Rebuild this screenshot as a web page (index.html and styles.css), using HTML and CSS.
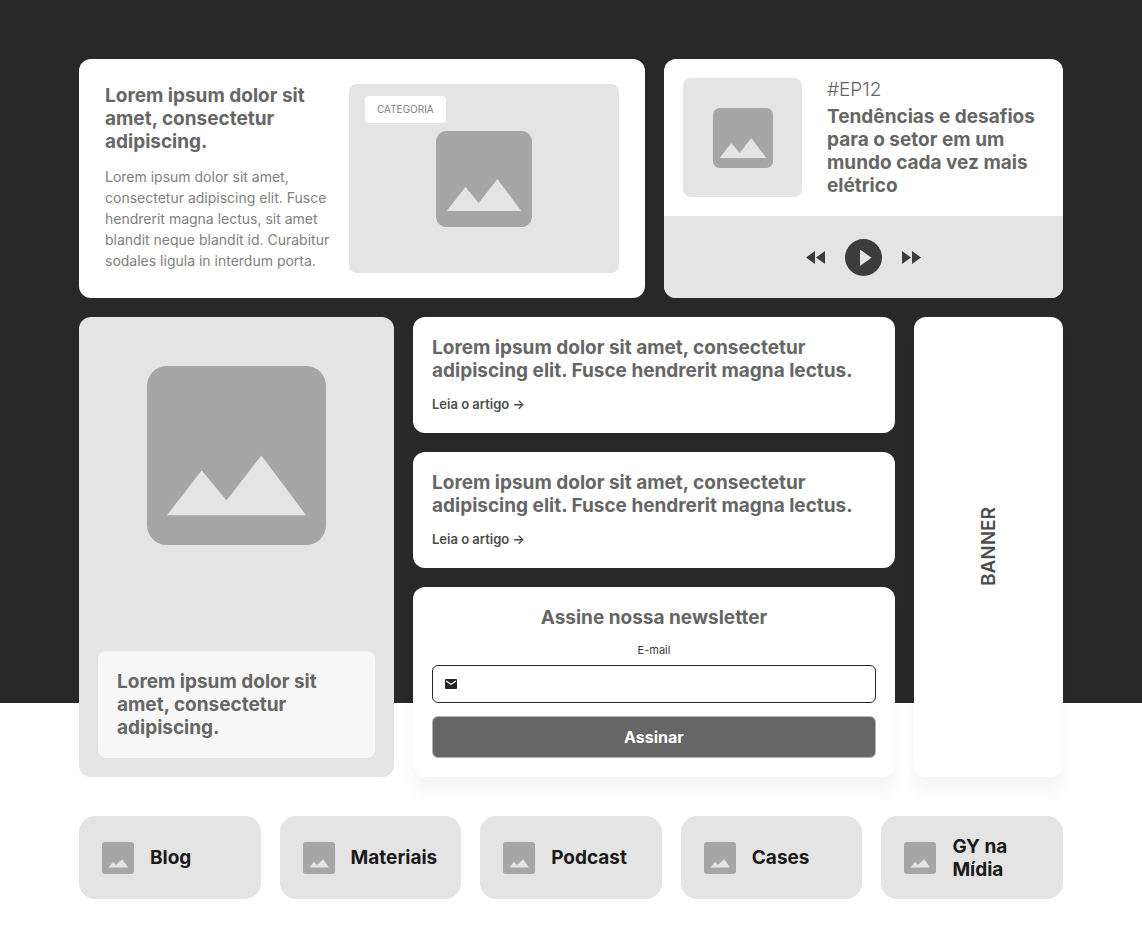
FILE: index.html
```html
<!DOCTYPE html>
<html lang="pt-BR">
<head>
    <meta charset="UTF-8">
    <meta name="viewport" content="width=device-width, initial-scale=1.0">
    <title>Conteúdos</title>
    <link rel="stylesheet" href="styles.css">
</head>
<body>
    <svg class="sprite" aria-hidden="true">
        <symbol id="picture" viewBox="0 0 18 18">
            <rect width="18" height="18" rx="2" fill="#a6a6a6"/>
            <path d="M2 15l3.5-4.5L8 13.5 11.5 9l4.5 6z" fill="#e4e4e4"/>
        </symbol>
        <symbol id="picture-small" viewBox="0 0 32 32">
            <rect width="32" height="32" rx="3" fill="#a6a6a6"/>
            <path d="M6.500 25.500L11 19.800l2.800 3.200L20.300 17.300 26 25.500z" fill="#e4e4e4"/>
        </symbol>
    </svg>

    <main class="page">
        <section class="row row-top">
            <article class="card feature">
                <div class="feature-text">
                    <h2 class="title">Lorem ipsum dolor sit amet, consectetur adipiscing.</h2>
                    <p>Lorem ipsum dolor sit amet, consectetur adipiscing elit. Fusce hendrerit magna lectus, sit amet blandit neque blandit id. Curabitur sodales ligula in interdum porta.</p>
                </div>
                <div class="feature-image">
                    <span class="tag">CATEGORIA</span>
                    <svg class="picture-medium" aria-hidden="true"><use href="#picture"/></svg>
                </div>
            </article>

            <article class="card podcast">
                <div class="podcast-info">
                    <div class="podcast-cover">
                        <svg class="picture-cover" aria-hidden="true"><use href="#picture"/></svg>
                    </div>
                    <div class="podcast-text">
                        <p class="episode">#EP12</p>
                        <h2 class="title">Tendências e desafios para o setor em um mundo cada vez mais elétrico</h2>
                    </div>
                </div>
                <div class="player">
                    <button type="button" class="player-button" aria-label="Voltar">
                        <svg width="19" height="13" viewBox="0 0 19 13"><path d="M9 0v13L0 6.500zM19 0v13l-9-6.500z" fill="#3c3c3c"/></svg>
                    </button>
                    <button type="button" class="player-button" aria-label="Reproduzir">
                        <svg width="37" height="37" viewBox="0 0 37 37"><circle cx="18.500" cy="18.500" r="18.500" fill="#3c3c3c"/><path d="M15 10.500v16.500l11.500-8.250z" fill="#e4e4e4"/></svg>
                    </button>
                    <button type="button" class="player-button" aria-label="Avançar">
                        <svg width="19" height="13" viewBox="0 0 19 13"><path d="M0 0v13l9-6.500zM10 0v13l9-6.500z" fill="#3c3c3c"/></svg>
                    </button>
                </div>
            </article>
        </section>

        <section class="row row-middle">
            <article class="card highlight">
                <div class="highlight-image">
                    <svg class="picture-large" aria-hidden="true"><use href="#picture"/></svg>
                </div>
                <h2 class="title caption">Lorem ipsum dolor sit amet, consectetur adipiscing.</h2>
            </article>

            <div class="column">
                <article class="card article">
                    <h2 class="title">Lorem ipsum dolor sit amet, consectetur adipiscing elit. Fusce hendrerit magna lectus.</h2>
                    <a class="read-more" href="#">Leia o artigo →</a>
                </article>
                <article class="card article">
                    <h2 class="title">Lorem ipsum dolor sit amet, consectetur adipiscing elit. Fusce hendrerit magna lectus.</h2>
                    <a class="read-more" href="#">Leia o artigo →</a>
                </article>
                <form class="card newsletter">
                    <h2 class="title">Assine nossa newsletter</h2>
                    <label for="email">E-mail</label>
                    <div class="field">
                        <svg width="12" height="10" viewBox="0 0 12 10" aria-hidden="true"><rect width="12" height="10" rx="1" fill="#222"/><path d="M1 2l5 3.200L11 2" fill="none" stroke="#fff" stroke-width="1.200"/></svg>
                        <input type="email" id="email" name="email">
                    </div>
                    <button type="submit" class="submit">Assinar</button>
                </form>
            </div>

            <aside class="card banner"><span>BANNER</span></aside>
        </section>

        <nav class="links">
            <a class="link" href="#"><svg class="picture-small" aria-hidden="true"><use href="#picture-small"/></svg>Blog</a>
            <a class="link" href="#"><svg class="picture-small" aria-hidden="true"><use href="#picture-small"/></svg>Materiais</a>
            <a class="link" href="#"><svg class="picture-small" aria-hidden="true"><use href="#picture-small"/></svg>Podcast</a>
            <a class="link" href="#"><svg class="picture-small" aria-hidden="true"><use href="#picture-small"/></svg>Cases</a>
            <a class="link" href="#"><svg class="picture-small" aria-hidden="true"><use href="#picture-small"/></svg>GY na Mídia</a>
        </nav>
    </main>
</body>
</html>
```
FILE: styles.css
```css
* {
    box-sizing: border-box;
}

body {
    margin: 0;
    font-family: Inter, sans-serif;
    color: #666;
    background: linear-gradient(#282828 703px, #fff 703px) no-repeat;
}

h2, p {
    margin: 0;
}

svg {
    display: block;
    flex-shrink: 0;
}

.sprite {
    display: none;
}

.page {
    padding: 59px 79px 45px;
}

.row {
    display: grid;
    gap: 19px;
}

.row-top {
    grid-template-columns: 566fr 399fr;
    margin-bottom: 19px;
}

.row-middle {
    grid-template-columns: 315fr 482fr 149fr;
    margin-bottom: 39px;
}

.card {
    background: #fff;
    border-radius: 12px;
}

.title {
    font-size: 19px;
    font-weight: 700;
    line-height: 23px;
}

/* Feature */
.feature {
    display: grid;
    grid-template-columns: 1fr 270px;
    gap: 12px;
    padding: 25px 26px;
}

.feature-text p {
    margin-top: 13px;
    font-size: 14px;
    line-height: 21px;
    color: #808080;
}

.feature-image {
    position: relative;
    display: flex;
    align-items: center;
    justify-content: center;
    background: #e4e4e4;
    border-radius: 8px;
}

.tag {
    position: absolute;
    top: 12px;
    left: 16px;
    padding: 0 12px;
    font-size: 10px;
    line-height: 27px;
    color: #808080;
    background: #fff;
    border-radius: 4px;
}

.picture-medium {
    width: 96px;
    height: 96px;
}

/* Podcast */
.podcast {
    display: flex;
    flex-direction: column;
    overflow: hidden;
}

.podcast-info {
    display: flex;
    gap: 25px;
    padding: 19px;
}

.podcast-cover {
    display: flex;
    flex-shrink: 0;
    align-items: center;
    justify-content: center;
    width: 119px;
    height: 119px;
    background: #e4e4e4;
    border-radius: 8px;
}

.picture-cover {
    width: 60px;
    height: 60px;
}

.episode {
    margin-bottom: 4px;
    font-size: 19px;
    font-weight: 300;
    line-height: 23px;
}

.player {
    display: flex;
    flex: 1;
    align-items: center;
    justify-content: center;
    gap: 20px;
    min-height: 82px;
    background: #e4e4e4;
}

.player-button {
    padding: 0;
    background: none;
    border: none;
    cursor: pointer;
}

/* Highlight */
.highlight {
    display: flex;
    flex-direction: column;
    justify-content: space-between;
    padding: 19px;
    background: #e4e4e4;
}

.highlight-image {
    display: flex;
    justify-content: center;
    padding-top: 30px;
}

.picture-large {
    width: 179px;
    height: 179px;
}

.caption {
    padding: 19px;
    background: #f7f7f7;
    border-radius: 8px;
}

/* Articles and newsletter */
.column {
    display: flex;
    flex-direction: column;
    gap: 19px;
}

.article {
    padding: 19px;
}

.read-more {
    display: block;
    width: fit-content;
    margin-top: 12px;
    font-size: 13px;
    font-weight: 600;
    line-height: 20px;
    color: #4d4d4d;
    text-decoration: none;
}

.newsletter {
    display: flex;
    flex-direction: column;
    padding: 19px;
    text-align: center;
    box-shadow: 0 16px 16px rgba(0, 0, 0, 0.04);
}

.newsletter label {
    margin: 12px 0 6px;
    font-size: 11px;
    line-height: 18px;
    color: #3c3c3c;
}

.field {
    display: flex;
    align-items: center;
    gap: 8px;
    height: 38px;
    padding: 0 12px;
    border: 1px solid #282828;
    border-radius: 6px;
}

.field input {
    flex: 1;
    min-width: 0;
    padding: 0;
    font: inherit;
    background: none;
    border: none;
    outline: none;
}

.submit {
    height: 42px;
    margin-top: 13px;
    font-family: inherit;
    font-size: 16px;
    font-weight: 700;
    color: #fff;
    background: #666;
    border: 1px solid #b4b4b4;
    border-radius: 6px;
    cursor: pointer;
}

/* Banner */
.banner {
    display: flex;
    align-items: center;
    justify-content: center;
    font-size: 19px;
    font-weight: 600;
    color: #4d4d4d;
    box-shadow: 0 16px 16px rgba(0, 0, 0, 0.04);
}

.banner span {
    writing-mode: vertical-rl;
    transform: rotate(180deg);
}

/* Links */
.links {
    display: grid;
    grid-template-columns: repeat(5, 1fr);
    gap: 19px;
}

.link {
    display: flex;
    align-items: center;
    gap: 16px;
    min-height: 83px;
    padding: 18px 20px 18px 23px;
    font-size: 19px;
    font-weight: 700;
    line-height: 23px;
    color: #1a1a1a;
    text-decoration: none;
    background: #e4e4e4;
    border-radius: 16px;
}

.picture-small {
    width: 32px;
    height: 32px;
}
```
